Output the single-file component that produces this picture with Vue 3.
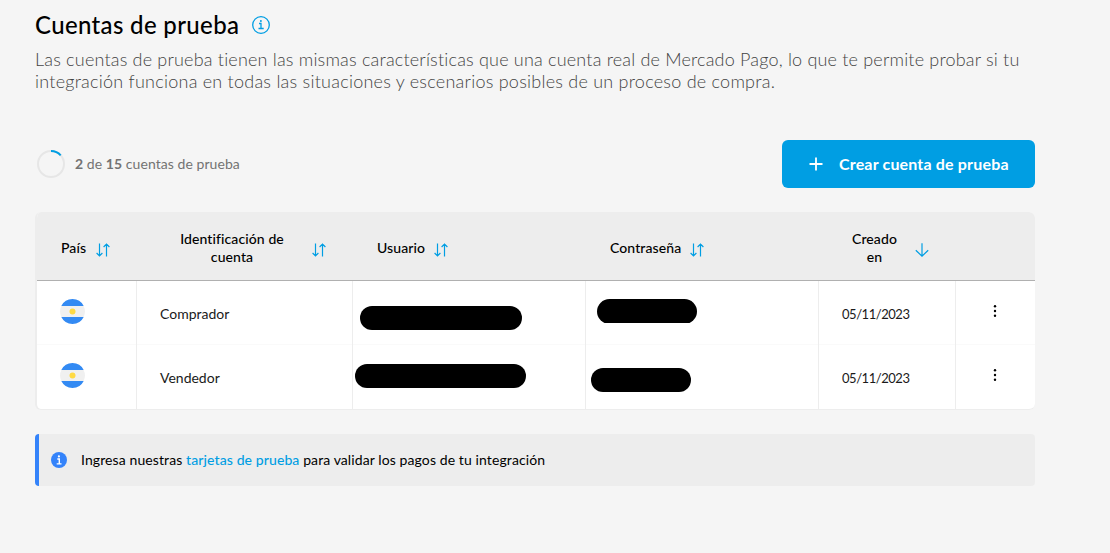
<script setup>
const columns = [
  { key: 'pais', lines: ['País'], sort: 'both' },
  { key: 'id', lines: ['Identificación de', 'cuenta'], sort: 'both' },
  { key: 'user', lines: ['Usuario'], sort: 'both' },
  { key: 'pass', lines: ['Contraseña'], sort: 'both' },
  { key: 'date', lines: ['Creado', 'en'], sort: 'down' },
  { key: 'menu', lines: [], sort: '' }
]
const rows = [
  { type: 'Comprador', date: '05/11/2023', n: 'one' },
  { type: 'Vendedor', date: '05/11/2023', n: 'two' }
]
</script>

<template>
  <main class="page">
    <header class="heading">
      <h1>Cuentas de prueba</h1>
      <svg class="info" viewBox="0 0 18 18">
        <circle cx="9" cy="9" r="8.3" />
        <path d="M7 7.5h2v5M6.5 12.5h5.2" /><circle class="dot" cx="8.9" cy="5" r="1" />
      </svg>
    </header>
    <p class="intro">
      <span class="l1">Las cuentas de prueba tienen las mismas características que una cuenta real de Mercado Pago, lo que te permite probar si tu</span><br>
      <span class="l2">integración funciona en todas las situaciones y escenarios posibles de un proceso de compra.</span>
    </p>

    <section class="toolbar">
      <div class="quota">
        <svg class="ring" viewBox="0 0 28 28">
          <circle cx="14" cy="14" r="13" />
          <path d="M14 1A13 13 0 0 1 23.7 5.3" />
        </svg>
        <span class="count"><b>2</b> de <b>15</b> cuentas de prueba</span>
      </div>
      <button class="create">
        <svg viewBox="0 0 14 14"><path d="M7 .5v13M.5 7h13" /></svg>
        <span>Crear cuenta de prueba</span>
      </button>
    </section>

    <section class="table">
      <div class="row head">
        <div v-for="c in columns" :key="c.key" class="cell" :class="'h-' + c.key">
          <span v-if="c.lines.length" class="label"><span v-for="l in c.lines" :key="l" class="line">{{ l }}</span></span>
          <svg v-if="c.sort === 'both'" class="sort" viewBox="0 0 14 14">
            <path d="M3.5 .5v12.3M.6 10l2.9 2.9L6.4 10M10.5 13.5V1.2M7.6 4l2.9-2.9L13.4 4" />
          </svg>
          <svg v-if="c.sort === 'down'" class="sort" viewBox="0 0 14 14">
            <path d="M7 .3v12.8M.8 7.2L7 13.2l6.2-6" />
          </svg>
        </div>
      </div>
      <div v-for="r in rows" :key="r.n" class="row body" :class="r.n">
        <div class="cell flagcell">
          <svg class="flag" viewBox="0 0 25 25">
            <path class="white" d="M1.4 7h22.2a12.5 12.5 0 0 1 0 11H1.4a12.5 12.5 0 0 1 0-11z" />
            <path class="blue" d="M1.3 7a12.5 12.5 0 0 1 22.4 0zM1.3 18a12.5 12.5 0 0 0 22.4 0z" />
            <circle cx="12.5" cy="12.5" r="3" />
          </svg>
        </div>
        <div class="cell type">{{ r.type }}</div>
        <div class="cell"><i class="mask user"></i></div>
        <div class="cell"><i class="mask pass"></i></div>
        <div class="cell date">{{ r.date }}</div>
        <div class="cell more">
          <svg viewBox="0 0 4 12"><circle cx="2" cy="1.3" r="1.2" /><circle cx="2" cy="6" r="1.2" /><circle cx="2" cy="10.7" r="1.2" /></svg>
        </div>
      </div>
    </section>

    <aside class="notice">
      <svg viewBox="0 0 16 16">
        <circle class="disc" cx="8" cy="8" r="8" />
        <path d="M6.3 7h2v4.8M5.7 11.9h4.8" /><circle class="dot" cx="7.9" cy="4.4" r="1.1" />
      </svg>
      <span class="message">Ingresa nuestras <a>tarjetas de prueba</a> para validar los pagos de tu integración</span>
    </aside>
  </main>
</template>

<style>
body { background: #f5f5f5; }
</style>

<style scoped>
* { box-sizing: border-box; }
.page { width: 1035px; height: 553px; padding: 12px 0 0 35px; font-family: Lato, "Open Sans", sans-serif; font-variant-ligatures: none; color: #000; overflow: hidden; }
.heading { display: flex; align-items: center; gap: 13px; height: 26px; }
h1 { margin: 0; font-size: 24px; line-height: 26px; font-weight: 500; white-space: nowrap; letter-spacing: .34px; }
.info { width: 18px; height: 18px; fill: none; stroke: #009ee3; stroke-width: 1.3; }
.info .dot { fill: #009ee3; stroke: none; }
.intro { margin: 10px 0 0; font-size: 18px; line-height: 22px; font-weight: 300; color: #444; white-space: nowrap; }
.l1 { letter-spacing: .19px; }
.l2 { letter-spacing: .24px; }
.toolbar { display: flex; justify-content: space-between; align-items: center; height: 48px; margin-top: 48px; }
.quota { display: flex; align-items: center; gap: 10px; padding-left: 2px; font-size: 14px; color: #737373; white-space: nowrap; }
.count { letter-spacing: .06px; margin-top: -1px; }
.ring { width: 28px; height: 28px; fill: none; stroke: #e6e6e6; stroke-width: 2; }
.ring path { stroke: #009ee3; }
.create { display: flex; align-items: center; width: 253px; height: 48px; padding: 0 0 0 27px; gap: 16px; border: 0; border-radius: 6px; background: #009ee3; color: #fff; font: bold 16px Lato, sans-serif; letter-spacing: .17px; white-space: nowrap; }
.create span { margin-top: -2px; }
.create svg { width: 14px; height: 14px; fill: none; stroke: #fff; stroke-width: 1.8; }
.table { height: 198px; margin-top: 24px; border: 1px solid #ededed; border-left-width: 2px; border-top: 0; border-right: 0; border-radius: 6px; background: #fff; overflow: hidden; }
.row { display: grid; grid-template-columns: 100px 216px 233px 233px 137px 1fr; height: 64px; font-size: 14px; }
.head { height: 69px; background: #ededed; border-bottom: 1px solid #b0b0b0; font-weight: 500; }
.head .cell { display: flex; align-items: center; padding-top: 4px; }
.body .cell { border-right: 1px solid #ededed; display: flex; align-items: center; }
.body .cell:last-child { border-right: 0; }
.body.one { box-shadow: inset 0 -1px #fafafa; }
.label { line-height: 18px; text-align: center; letter-spacing: .1px; }
.line { display: block; white-space: nowrap; }
.sort { width: 14px; height: 14px; fill: none; stroke: #009ee3; stroke-width: 1.2; flex: none; margin-top: 3px; }
.h-pais { padding-left: 24px; gap: 10px; }
.h-id { padding-left: 24px; gap: 9px; }
.h-id .label { width: 142px; }
.h-user { padding-left: 24px; gap: 9px; }
.h-pass { padding-left: 24px; gap: 9px; }
.h-date { padding-left: 24px; gap: 9px; }
.h-date .label { width: 63px; }
.body .flagcell { padding: 0 0 3px 23px; }
.flag { width: 25px; height: 25px; }
.flag .white { fill: #f0f0f0; }
.flag .blue { fill: #338af3; }
.flag circle { fill: #ffda44; }
.type { padding: 1px 0 0 23px; color: #1a1a1a; }
.date { padding: 1px 0 0 23px; color: #1a1a1a; font-size: 13px; letter-spacing: -.46px; }
.more { justify-content: center; padding: 0 2px 4px 0; }
.more svg { width: 4px; height: 12px; }
.mask { display: block; height: 24px; border-radius: 12px; background: #000; align-self: flex-start; }
.one .user { width: 162px; margin: 25px 0 0 7px; }
.two .user { width: 171px; margin: 19px 0 0 2px; }
.one .pass { width: 100px; height: 25px; margin: 18px 0 0 11px; border-radius: 12.5px; clip-path: inset(0 0 1px 0); }
.two .pass { width: 100px; margin: 23px 0 0 5px; }
.notice { display: flex; align-items: center; height: 52px; margin-top: 24px; padding-left: 12px; gap: 14px; border-left: 4px solid #3483fa; border-radius: 4px; background: #ededed; font-size: 14px; letter-spacing: .1px; white-space: nowrap; }
.notice svg { width: 16px; height: 16px; fill: none; stroke: #fff; stroke-width: 1.4; }
.notice .disc { fill: #3483fa; stroke: none; }
.notice .dot { fill: #fff; stroke: none; }
.notice .message { margin-top: -2px; }
.notice a { color: #009ee3; font-weight: 500; }
</style>
